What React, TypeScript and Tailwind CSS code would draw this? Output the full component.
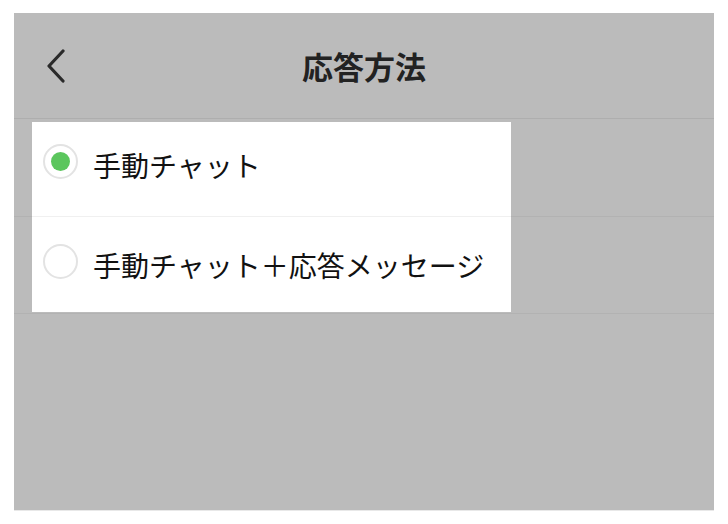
import { useState } from 'react';

const options = ['手動チャット', '手動チャット＋応答メッセージ'];

export default function App() {
  const [selected, setSelected] = useState(0);

  return (
    <div
      className="h-[524px] w-[728px] bg-white pt-[13px] pl-[14px]"
      style={{ fontFamily: '"Noto Sans CJK JP", "Noto Sans", sans-serif' }}
    >
      <div className="h-[498px] w-[700px] bg-[#bbbbbb] border-b border-[#e8e8e8]">
        {/* Header */}
        <div className="relative flex h-[106px] items-center justify-center border-b border-[#aeaeae]">
          <button className="absolute left-[30px] top-[36px] text-[#2a2a2a]" aria-label="Back">
            <svg width="26" height="34" viewBox="0 0 26 34" fill="none">
              <path d="M19 2 L5 17 L19 32" stroke="currentColor" strokeWidth="3.2" strokeLinecap="round" strokeLinejoin="round" />
            </svg>
          </button>
          <h1 className="text-[31px] font-bold text-[#222] leading-none">応答方法</h1>
        </div>

        {/* List */}
        <div className="relative">
          <div className="h-[98px] border-b border-[#b2b2b2]" />
          <div className="h-[97px] border-b border-[#b2b2b2]" />

          {/* Spotlight */}
          <div className="absolute left-[18px] top-[3px] w-[479px] bg-white">
            {options.map((label, i) => (
              <button
                key={label}
                onClick={() => setSelected(i)}
                className={`flex w-full items-center gap-[15px] pl-[11px] text-left ${
                  i === 0 ? 'h-[95px] pb-2 border-b border-[#f0f0f0]' : 'h-[95px]'
                }`}
              >
                <span className="mb-[7px] flex h-[35px] w-[35px] shrink-0 items-center justify-center rounded-full border-2 border-[#e3e3e3] bg-white">
                  {selected === i && <span className="h-[19px] w-[19px] rounded-full bg-[#5bc65d]" />}
                </span>
                <span className="text-[28px] leading-none text-[#111]">{label}</span>
              </button>
            ))}
          </div>
        </div>
      </div>
    </div>
  );
}
